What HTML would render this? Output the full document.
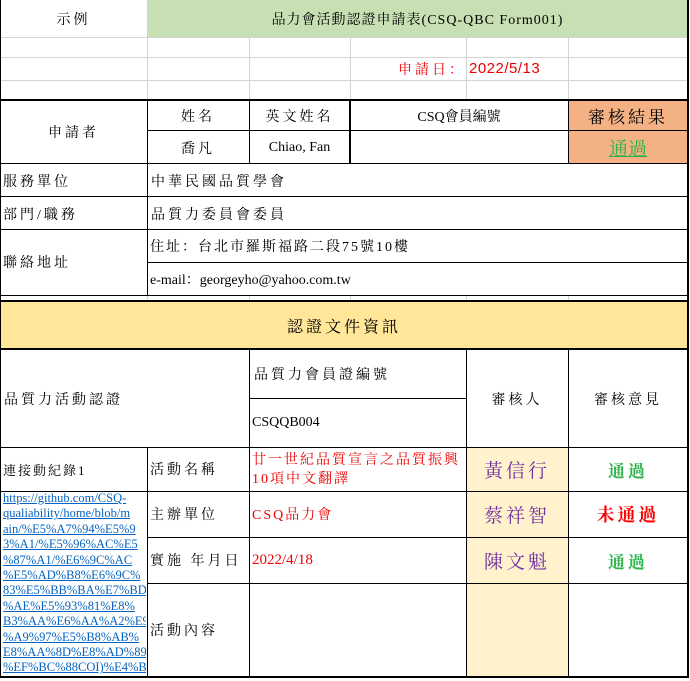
<!DOCTYPE html>
<html><head><meta charset="utf-8"><style>
body{margin:0;width:690px;height:681px;background:#fff;position:relative;overflow:hidden;font-family:"Liberation Serif","Noto Serif CJK SC",serif;font-size:14px;color:#000}
.c{position:absolute;display:flex;align-items:center;box-sizing:border-box;white-space:nowrap}
.ctr{justify-content:center}
.l{position:absolute;background:#000}
.g{position:absolute;background:#d4d4d4}
.sp{letter-spacing:3px}
a{color:#0563c1;text-decoration:underline}
</style></head><body>
<div style="position:absolute;left:147px;top:0;width:541px;height:37px;background:#c6e0b4"></div>
<div style="position:absolute;left:568px;top:100px;width:120px;height:64px;background:#f4b183"></div>
<div style="position:absolute;left:0;top:301px;width:688px;height:49px;background:#ffe699"></div>
<div style="position:absolute;left:466px;top:447px;width:102px;height:230px;background:#fff2cc"></div>

<div class="g" style="left:0;top:37px;width:688px;height:1px"></div>
<div class="g" style="left:0;top:57px;width:688px;height:1px"></div>
<div class="g" style="left:0;top:80px;width:688px;height:1px"></div>
<div class="g" style="left:147px;top:37px;width:1px;height:63px"></div>
<div class="g" style="left:249px;top:37px;width:1px;height:63px"></div>
<div class="g" style="left:350px;top:37px;width:1px;height:63px"></div>
<div class="g" style="left:466px;top:37px;width:1px;height:63px"></div>
<div class="g" style="left:568px;top:37px;width:1px;height:63px"></div>
<div class="g" style="left:249px;top:0;width:1px;height:2px"></div>
<div class="g" style="left:147px;top:296px;width:1px;height:5px"></div>
<div class="g" style="left:249px;top:296px;width:1px;height:5px"></div>
<div class="g" style="left:350px;top:296px;width:1px;height:5px"></div>
<div class="g" style="left:466px;top:296px;width:1px;height:5px"></div>
<div class="g" style="left:568px;top:296px;width:1px;height:5px"></div>

<div class="l" style="left:0;top:0;width:1px;height:677px"></div>
<div class="l" style="left:687px;top:0;width:2px;height:677px"></div>
<div class="l" style="left:0;top:99px;width:689px;height:2px"></div>
<div class="l" style="left:147px;top:100px;width:1px;height:195px"></div>
<div class="l" style="left:249px;top:100px;width:1px;height:64px"></div>
<div class="l" style="left:349px;top:100px;width:2px;height:64px"></div>
<div class="l" style="left:568px;top:100px;width:1px;height:64px"></div>
<div class="l" style="left:147px;top:130px;width:541px;height:1px"></div>
<div class="l" style="left:0;top:163px;width:689px;height:1px"></div>
<div class="l" style="left:0;top:196px;width:689px;height:1px"></div>
<div class="l" style="left:0;top:229px;width:689px;height:1px"></div>
<div class="l" style="left:147px;top:262px;width:541px;height:1px"></div>
<div class="l" style="left:0;top:295px;width:689px;height:1px"></div>
<div class="l" style="left:0;top:300px;width:689px;height:2px"></div>
<div class="l" style="left:0;top:348px;width:689px;height:2px"></div>
<div class="l" style="left:249px;top:350px;width:1px;height:327px"></div>
<div class="l" style="left:466px;top:350px;width:1px;height:327px"></div>
<div class="l" style="left:568px;top:350px;width:1px;height:327px"></div>
<div class="l" style="left:249px;top:398px;width:217px;height:1px"></div>
<div class="l" style="left:0;top:447px;width:689px;height:1px"></div>
<div class="l" style="left:147px;top:447px;width:1px;height:230px"></div>
<div class="l" style="left:0;top:491px;width:689px;height:1px"></div>
<div class="l" style="left:147px;top:537px;width:541px;height:1px"></div>
<div class="l" style="left:147px;top:583px;width:541px;height:1px"></div>
<div class="l" style="left:0;top:676px;width:689px;height:2px"></div>

<div class="c ctr sp" style="left:0;top:0;width:147px;height:37px">示例</div>
<div class="c ctr" style="left:147px;top:0;width:541px;height:37px;letter-spacing:1px">品力會活動認證申請表(CSQ-QBC Form001)</div>
<div class="c sp" style="left:398px;top:57px;height:23px;color:#e00">申請日：</div>
<div class="c" style="left:469px;top:57px;height:23px;color:#e00;font-family:'Liberation Sans',sans-serif;font-size:15px;letter-spacing:0.5px">2022/5/13</div>
<div class="c ctr sp" style="left:0;top:100px;width:147px;height:64px">申請者</div>
<div class="c ctr sp" style="left:147px;top:100px;width:102px;height:31px">姓名</div>
<div class="c ctr sp" style="left:249px;top:100px;width:101px;height:31px">英文姓名</div>
<div class="c ctr" style="left:350px;top:100px;width:218px;height:31px">CSQ會員編號</div>
<div class="c ctr sp" style="left:568px;top:100px;width:120px;height:31px;font-size:17px">審核結果</div>
<div class="c ctr sp" style="left:147px;top:131px;width:102px;height:33px">喬凡</div>
<div class="c ctr" style="left:249px;top:131px;width:101px;height:33px">Chiao, Fan</div>
<div class="c ctr" style="left:568px;top:131px;width:120px;height:33px;font-size:19px;color:#2db34a;text-decoration:underline">通過</div>
<div class="c sp" style="left:3px;top:164px;height:33px">服務單位</div>
<div class="c sp" style="left:151px;top:164px;height:33px">中華民國品質學會</div>
<div class="c sp" style="left:3px;top:197px;height:33px">部門/職務</div>
<div class="c sp" style="left:151px;top:197px;height:33px">品質力委員會委員</div>
<div class="c sp" style="left:3px;top:229px;height:66px">聯絡地址</div>
<div class="c" style="left:150px;top:229px;height:33px;letter-spacing:2px">住址：台北市羅斯福路二段75號10樓</div>
<div class="c" style="left:150px;top:262px;height:33px">e-mail：georgeyho@yahoo.com.tw</div>
<div class="c ctr sp" style="left:0;top:301px;width:688px;height:48px;font-size:16px">認證文件資訊</div>
<div class="c sp" style="left:4px;top:350px;height:97px">品質力活動認證</div>
<div class="c sp" style="left:254px;top:350px;height:48px">品質力會員證編號</div>
<div class="c" style="left:252px;top:398px;height:49px">CSQQB004</div>
<div class="c ctr sp" style="left:466px;top:350px;width:102px;height:97px">審核人</div>
<div class="c ctr sp" style="left:568px;top:350px;width:120px;height:97px">審核意見</div>
<div class="c sp" style="left:3px;top:447px;height:44px;font-size:13px;letter-spacing:2px">連接動紀錄1</div>
<div style="position:absolute;left:3px;top:491px;width:143px;height:185px;overflow:hidden;font-size:12.5px;line-height:15.4px;white-space:nowrap"><a>https://github.com/CSQ-<br>qualiability/home/blob/m<br>ain/%E5%A7%94%E5%9<br>3%A1/%E5%96%AC%E5<br>%87%A1/%E6%9C%AC<br>%E5%AD%B8%E6%9C%<br>83%E5%BB%BA%E7%BD<br>%AE%E5%93%81%E8%<br>B3%AA%E6%AA%A2%E9<br>%A9%97%E5%B8%AB%<br>E8%AA%8D%E8%AD%89<br>%EF%BC%88COI)%E4%B</a></div>
<div class="c sp" style="left:150px;top:447px;height:44px">活動名稱</div>
<div style="position:absolute;left:252px;top:451px;width:214px;color:#e00;line-height:19px;letter-spacing:2px">廿一世紀品質宣言之品質振興10項中文翻譯</div>
<div class="c ctr sp" style="left:466px;top:447px;width:102px;height:44px;font-size:19px;color:#7030a0">黃信行</div>
<div class="c ctr sp" style="left:568px;top:447px;width:120px;height:44px;font-size:17px;color:#2db34a;font-weight:bold">通過</div>
<div class="c sp" style="left:150px;top:491px;height:46px">主辦單位</div>
<div class="c" style="left:252px;top:491px;height:46px;color:#e00;letter-spacing:2px">CSQ品力會</div>
<div class="c ctr sp" style="left:466px;top:491px;width:102px;height:46px;font-size:19px;color:#7030a0">蔡祥智</div>
<div class="c ctr sp" style="left:568px;top:491px;width:120px;height:46px;font-size:18px;color:#f00;font-weight:bold">未通過</div>
<div class="c sp" style="left:150px;top:537px;height:46px">實施 年月日</div>
<div class="c" style="left:252px;top:537px;height:46px;color:#e00;font-size:15px">2022/4/18</div>
<div class="c ctr sp" style="left:466px;top:537px;width:102px;height:46px;font-size:19px;color:#7030a0">陳文魁</div>
<div class="c ctr sp" style="left:568px;top:537px;width:120px;height:46px;font-size:17px;color:#2db34a;font-weight:bold">通過</div>
<div class="c sp" style="left:150px;top:583px;height:94px">活動內容</div>
</body></html>
